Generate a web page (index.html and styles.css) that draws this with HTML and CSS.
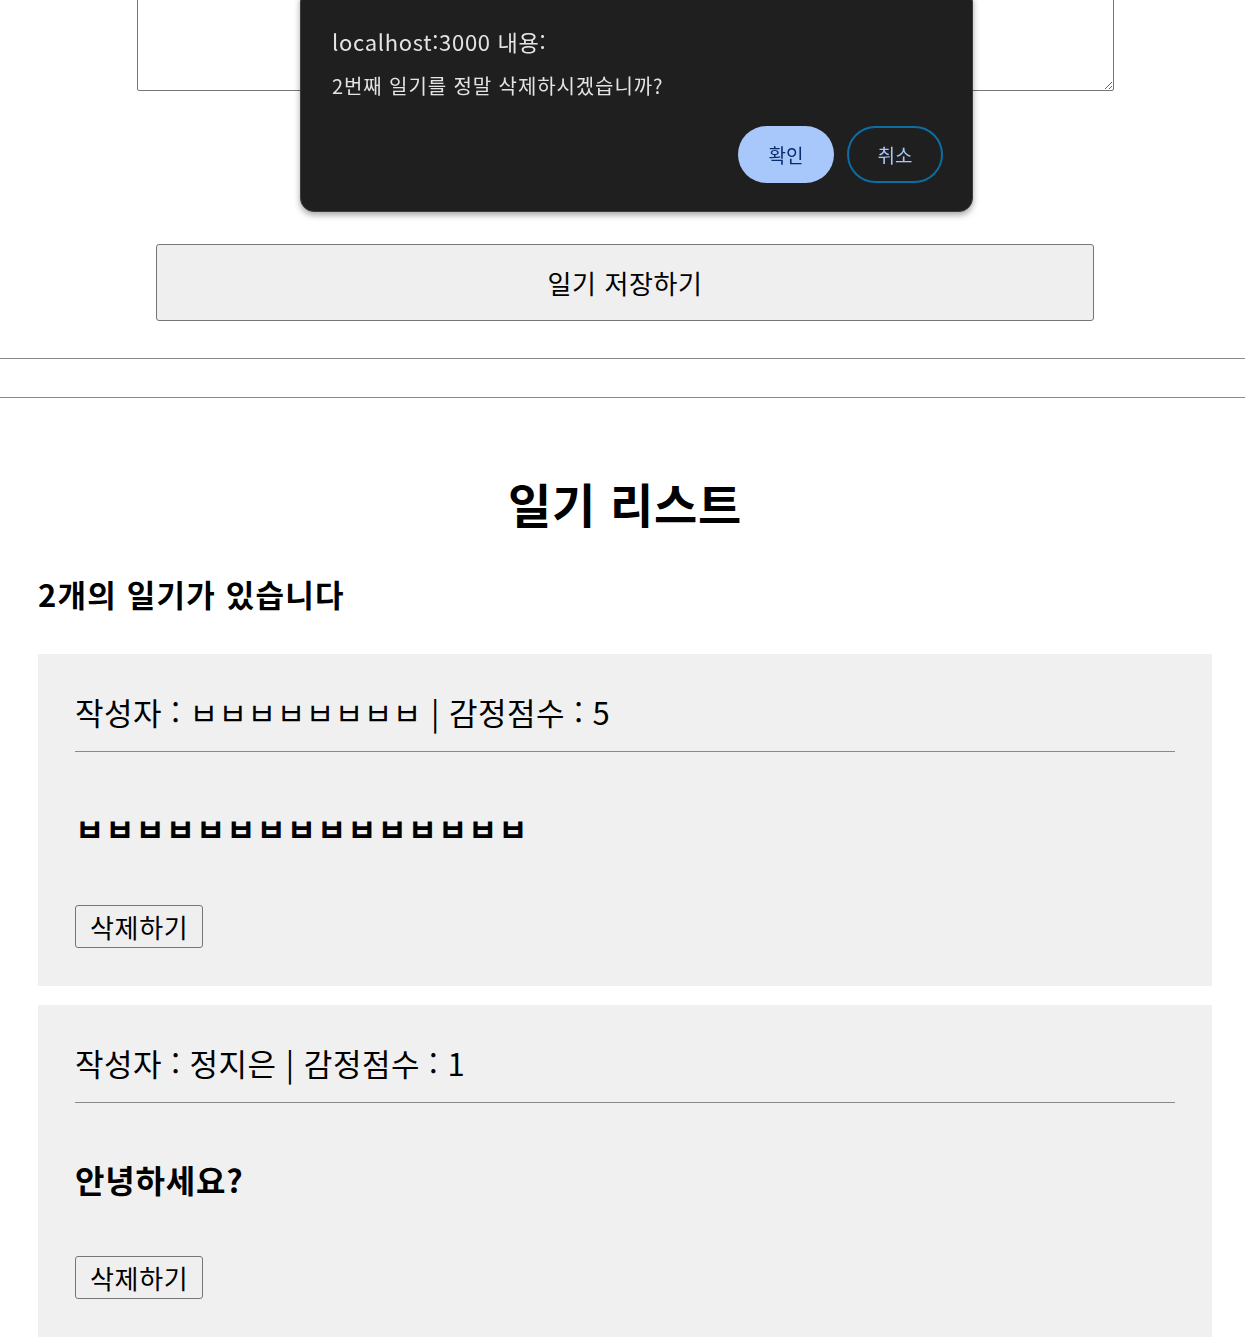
FILE: index.html
```html
<!DOCTYPE html>
<html lang="ko">
<head>
  <meta charset="UTF-8" />
  <title>감정 일기장</title>
  <link rel="stylesheet" href="styles.css">
</head>
<body>
  <div class="page">

    <!-- 일기 작성 -->
    <div class="editor">
      <textarea class="content-input"></textarea>
      <button class="save-btn">일기 저장하기</button>
    </div>

    <hr class="divider" />
    <hr class="divider second" />

    <!-- 일기 리스트 -->
    <div class="diary-list">
      <h2>일기 리스트</h2>
      <h4>2개의 일기가 있습니다</h4>

      <div class="diary-item">
        <div class="info">작성자 : ㅂㅂㅂㅂㅂㅂㅂㅂ | 감정점수 : 5</div>
        <hr />
        <div class="content">ㅂㅂㅂㅂㅂㅂㅂㅂㅂㅂㅂㅂㅂㅂㅂ</div>
        <button class="remove-btn">삭제하기</button>
      </div>

      <div class="diary-item">
        <div class="info">작성자 : 정지은 | 감정점수 : 1</div>
        <hr />
        <div class="content">안녕하세요?</div>
        <button class="remove-btn">삭제하기</button>
      </div>
    </div>
  </div>

  <!-- confirm 창 -->
  <div class="dialog">
    <div class="dialog-title">localhost:3000 내용:</div>
    <div class="dialog-msg">2번째 일기를 정말 삭제하시겠습니까?</div>
    <div class="dialog-actions">
      <button class="ok">확인</button>
      <button class="cancel">취소</button>
    </div>
  </div>
</body>
</html>
```

FILE: styles.css
```css
html {
  overflow: hidden;
}

body {
  margin: 0;
  font-family: "Noto Sans CJK KR", "Noto Sans", sans-serif;
  color: black;
  background: white;
}

.page {
  width: 1250px;
}

.editor {
  display: flex;
  flex-direction: column;
  align-items: center;
  margin-top: -60px;
}

.content-input {
  box-sizing: border-box;
  width: 977px;
  height: 151px;
  border: 1px solid #767676;
  border-radius: 2px;
  resize: vertical;
  font-family: inherit;
}

.save-btn {
  box-sizing: border-box;
  width: 938px;
  height: 77px;
  margin-top: 153px;
  background: #efefef;
  border: 1px solid #767676;
  border-radius: 3px;
  font-family: inherit;
  font-size: 26px;
  letter-spacing: 0.6px;
  color: black;
}

.divider {
  margin: 37px 0 0;
  border: none;
  border-top: 1px solid #8a8a8a;
}

.divider.second {
  margin-top: 38px;
}

.diary-list {
  padding: 75px 38px 0;
}

.diary-list h2 {
  margin: 0;
  text-align: center;
  font-size: 47px;
  line-height: 60px;
  letter-spacing: 0.8px;
  font-weight: bold;
}

.diary-list h4 {
  margin: 41px 0 40px;
  font-size: 31px;
  line-height: 40px;
  letter-spacing: 1.2px;
  font-weight: bold;
}

.diary-item {
  background: #f0f0f0;
  padding: 37px 37px 38px;
  margin-bottom: 19px;
}

.info {
  font-size: 31px;
  line-height: 42px;
  letter-spacing: 0.5px;
}

.diary-item hr {
  margin: 18px 0 0;
  border: none;
  border-top: 1px solid #8a8a8a;
}

.content {
  margin: 55px 0 56px;
  font-size: 32px;
  line-height: 42px;
  letter-spacing: 0.8px;
  font-weight: bold;
}

.remove-btn {
  box-sizing: border-box;
  height: 43px;
  padding: 0 14px;
  background: #efefef;
  border: 1px solid #767676;
  border-radius: 3px;
  font-family: inherit;
  font-size: 26px;
  letter-spacing: 0.7px;
  color: black;
}

.dialog {
  position: fixed;
  top: -12px;
  left: 300px;
  box-sizing: border-box;
  width: 673px;
  height: 224px;
  padding: 34px 29px 29px 31px;
  background: #1f1f1f;
  border: 1px solid #3c3c3c;
  border-radius: 14px;
  box-shadow: 0 3px 6px rgba(0, 0, 0, 0.35);
  color: #e3e3e3;
}

.dialog-title {
  font-size: 22px;
  line-height: 36px;
  letter-spacing: 0.7px;
}

.dialog-msg {
  margin-top: 13px;
  font-size: 20px;
  line-height: 28px;
  letter-spacing: 0.9px;
}

.dialog-actions {
  display: flex;
  justify-content: flex-end;
  gap: 13px;
  margin-top: 26px;
}

.dialog-actions button {
  box-sizing: border-box;
  width: 96px;
  height: 57px;
  border-radius: 29px;
  font-family: inherit;
  font-size: 19px;
}

.ok {
  background: #a8c7fa;
  border: none;
  color: #062e6f;
}

.cancel {
  background: transparent;
  border: 2px solid #0b6ea3;
  color: #a8c7fa;
}
```
